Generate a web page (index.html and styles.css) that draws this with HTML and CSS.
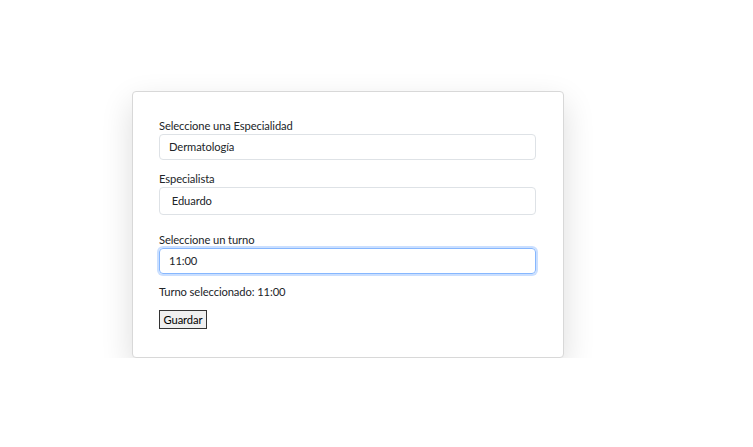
FILE: index.html
```html
<!DOCTYPE html>
<html lang="es">
<head>
<meta charset="utf-8">
<link rel="stylesheet" href="styles.css">
</head>
<body>
<div class="card">
  <div class="field">
    <label class="label">Seleccione una Especialidad</label>
    <div class="input">Dermatología</div>
  </div>
  <div class="field">
    <label class="label">Especialista</label>
    <div class="input tall">&nbsp;Eduardo</div>
  </div>
  <div class="field turno">
    <label class="label">Seleccione un turno</label>
    <div class="input focus">11:00</div>
  </div>
  <p class="selected">Turno seleccionado: 11:00</p>
  <button class="btn">Guardar</button>
</div>
</body>
</html>
```
FILE: styles.css
```css
html, body { margin: 0; padding: 0; background: #fff; }
body {
  font-family: Lato, "Open Sans", sans-serif;
  font-size: 11.2px;
  letter-spacing: -0.1px;
  color: #212529;
  padding: 91px 0 0 132px;
}
.card {
  width: 377px;
  height: 223px;
  padding: 26px 27px 16px 26px;
  border: 1px solid #d8d8d8;
  border-radius: 4px;
  box-shadow: 0 12px 32px rgba(0,0,0,0.14);
  background: #fff;
}
.field { display: flex; flex-direction: column; margin-bottom: 11px; }
.field.turno { margin-top: 17px; margin-bottom: 10px; }
.label { line-height: 15px; margin-bottom: 1px; }
.input {
  box-sizing: border-box;
  height: 26px;
  border: 1px solid #dee2e6;
  border-radius: 4px;
  padding: 0 9px;
  display: flex;
  align-items: center;
  line-height: 1;
}
.input.tall { height: 28px; }
.input.focus {
  border-color: #86b7fe;
  box-shadow: 0 0 0 2px rgba(13,110,253,0.22);
}
.selected { margin: 0 0 11px 0; line-height: 15px; }
.btn {
  font-family: Lato, "Open Sans", sans-serif;
  font-size: 11.2px;
  letter-spacing: -0.1px;
  color: #000;
  background: #efefef;
  border: 1px solid #333;
  border-radius: 0;
  padding: 0 3px;
  height: 19px;
  width: 48px;
  line-height: 15px;
}
```
